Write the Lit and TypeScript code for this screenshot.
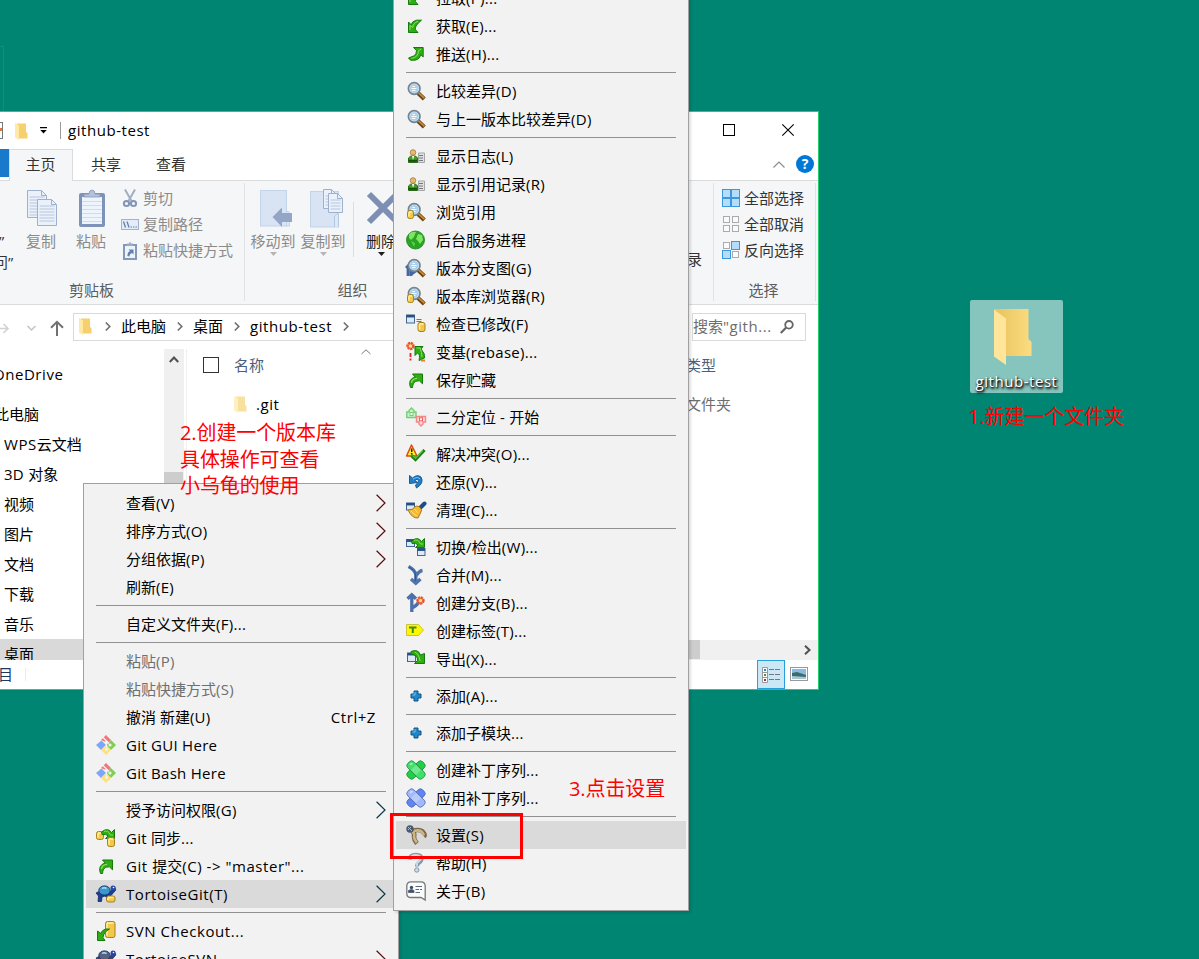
import { LitElement, html, svg, css, nothing } from "lit";
import { customElement, property } from "lit/decorators.js";

const mix = (text: string, wide = false) =>
  text.split(/([\x21-\x7e][\x20-\x7e]*)/).map((part, i) => (i % 2 ? html`<span class="lat ${wide ? "wide" : ""}">${part}</span>` : part));

const shared = css`
  .lat { letter-spacing: 0.28px; }
  .lat.wide { letter-spacing: 0.55px; }
  svg { display: block; overflow: visible; flex: none; }
`;

/* ---------- menu icons, 20 x 20 grid ---------- */
const G = "#2fae14", GD = "#157a0c";
const arrowUR = svg`<path d="M4.500 17.500Q2.600 12 5.200 9.300Q7 7.200 9.400 7.200L6.500 4H16.500V13.800L13.400 10.800Q9 10.500 7.600 13.200Q6.600 15 6.600 17.500Z" fill="${G}" stroke="${GD}"/><path d="M5.400 13Q6 8.500 11 8.300" fill="none" stroke="#8be05c" stroke-width="1.300"/>`;
const arrowDL = svg`<path d="M15.500 4.200H10.500Q5.500 5.500 5.300 8.800L2.500 6V16.500H12L9.300 13.500Q8.800 9.500 15.500 4.200Z" fill="${G}" stroke="${GD}"/><path d="M12 5.200Q7 7 6.800 11.500L4 9.500V14" fill="none" stroke="#8be05c"/>`;
const push = svg`<path d="M2.500 14L4.500 16.200H9Q14.200 15 14.600 10.500L17.200 13V3.500H7.500L10.500 6.500Q10.800 11 7.500 12Q5 13 2.500 14Z" fill="${G}" stroke="${GD}"/><path d="M5.500 14.300Q12.500 13.500 12.500 6.500L15.500 5" fill="none" stroke="#8be05c"/>`;
const lens = svg`<path d="M12 12L18.300 18" stroke="#6a431a" stroke-width="4.200"/><path d="M12.500 11.800L18.300 17.200" stroke="#cf8a2c" stroke-width="1.700"/><circle cx="8.200" cy="7.500" r="5.800" fill="#cfe6f5" stroke="#74838f" stroke-width="1.700"/><circle cx="8.200" cy="7.500" r="4.200" fill="#a9cfec"/><path d="M5.500 7.500H10.500M6.500 5.500H9M6 9.500H9.500" stroke="#fff" stroke-width="1.100"/>`;
const cyl = (x: number, y: number, w = 7, h = 9) => svg`<rect x="${x}" y="${y}" width="${w}" height="${h}" rx="2" fill="#f2c84b" stroke="#a8801c"/><path d="M${x + 1.5} ${y + 2}V${y + h - 2}M${x + 1.5} ${y + 1.5}H${x + w - 1.5}" stroke="#fff0a8" stroke-width="1.400"/>`;
const user = svg`<circle cx="7" cy="6.500" r="2.800" fill="#e6b873" stroke="#a87936" stroke-width=".8"/><path d="M2.500 16.500V12Q4 9.500 7 10Q10.500 9.500 11.500 12V16.500Z" fill="#3fa01f" stroke="#286e14"/><path d="M2.500 14.800H11" stroke="#174d0c" stroke-width="2"/><path d="M6 10L7 14L8.300 10Z" fill="#fff"/><path d="M12.500 7H18.500V16.500H12.500Z" fill="#dfe1e3" stroke="#a3a6a9"/><path d="M13 9.500H17M13 12H17M13 14.500H17" stroke="#777"/>`;
const blueWin = (x: number, y: number, w: number, h: number) => svg`<rect x="${x}" y="${y}" width="${w}" height="${h}" fill="#dce9f6" stroke="#41668f"/><path d="M${x} ${y + 1.2}H${x + w}" stroke="#244f87" stroke-width="2.500"/>`;
const star = (x: number, y: number, r: number) => svg`<circle cx="${x}" cy="${y}" r="${r}" fill="#f99a60" stroke="#e9552b" stroke-width="2.400" stroke-dasharray="2.200 .6"/><circle cx="${x}" cy="${y}" r="1.500" fill="#ffe09a"/>`;
const swoop = svg`<path d="M5.500 4Q12-1 15.500 4.500L18.500 1.500V10.500H9.500L12 8Q10 5.500 6 6.500Z" fill="${G}" stroke="${GD}"/><path d="M8 3.500Q12 1.500 14.500 7H17" fill="none" stroke="#8be05c"/>`;
const plus = svg`<path d="M8 5H12V8H15V12H12V15H8V12H5V8H8Z" fill="#1e88c9" stroke="#125585"/><path d="M9 6V9H6.500" fill="none" stroke="#74c4ef"/>`;
const patch = (a: string, b: string, c: string) => svg`<g stroke="${c}" stroke-width=".8"><rect x="-4.300" y="-10.500" width="8.600" height="21" rx="3.200" transform="translate(10 10) rotate(45)" fill="${b}"/><rect x="-4.300" y="-10.500" width="8.600" height="21" rx="3.200" transform="translate(10 10) rotate(-45)" fill="${a}"/></g><path d="M10 5L15 10L10 15L5 10Z" fill="#fff" fill-opacity=".25"/><path d="M4 4.500L6.500 3.500" stroke="#fff" stroke-opacity=".6" stroke-width="1.500"/>`;
const gitLogo = svg`<path d="M5.500 5.500L10 10L5 15L0 10Z" fill="#7aa7fb"/><path d="M10 0L15 5L12 8L5 5Z" fill="#f0777c"/><path d="M15 5L20 10L15 15L10 10Z" fill="#7fcf54"/><path d="M10 10L15 15L10 20L5 15Z" fill="#ffe07a"/><path d="M7 2.500L13 8.500M10.500 7V15" stroke="#f2f2f2" stroke-width="1.300"/><circle cx="10.500" cy="7.300" r="1.600" fill="#f2f2f2"/><circle cx="14" cy="10" r="1.600" fill="#f2f2f2"/><circle cx="10.500" cy="14.500" r="1.600" fill="#f2f2f2"/>`;
const turtle = (shell: string, body: string) => svg`<path d="M0 9L4 7L14 8L18.500 2L19.800 6L15 11.500L14 14H11L9 12L6 13L5.500 17.500H2L2.500 12Z" fill="${body}" stroke="#0c1f5c" stroke-width=".7"/><ellipse cx="8.500" cy="6.500" rx="5.700" ry="4.600" fill="${shell}" stroke="#123a70"/><path d="M6 4.500Q8 3 10.500 4.500" fill="none" stroke="#a9def5" stroke-width="1.500"/><circle cx="17" cy="4" r="2.500" fill="#2448a8"/><circle cx="17.500" cy="3.500" r=".8" fill="#fff"/>`;

const icons: Record<string, unknown> = {
  arrowUR, arrowDL, push, lens, user, swoop, plus, gitLogo,
  browse: svg`${lens}${cyl(1.5, 8.5, 6, 8)}`,
  globe: svg`<circle cx="9.500" cy="10" r="9" fill="#27a523" stroke="#1c8020" stroke-width=".8"/><path d="M3 4Q6 1 10 2L8 7L5 10L3 8ZM12 4L16 5L17 10L14 14L12 11L10 9Z" fill="#8ff06b" fill-opacity=".85"/><path d="M5 11L9 13L8 17Z" fill="#62d04b"/>`,
  graph: svg`<path d="M2 18V8L0 10M5 18V8M2 9L6 4M4 17L11 12" fill="none" stroke="#4467a3" stroke-width="2.800"/>${lens}`,
  check: svg`${blueWin(.5, 1, 8, 8)}<path d="M10.500 5.500H15.500M10.500 7.500H15.500" stroke="#6b7780"/>${cyl(12, 8.5)}`,
  rebase: svg`${star(4.5, 4, 3)}<path d="M4.500 11V15M4.500 16.500V18.500" stroke="#e02020" stroke-width="1.800"/><path d="M9 4.500H17L15 7Q19.500 12 18.500 16L13 18.500Q14.500 12 11.500 11L9 13.500Z" fill="${G}" stroke="${GD}"/><path d="M10.500 6H14Q16 10 16 15" fill="none" stroke="#8be05c"/><path d="M15 18.500L19 18.500" stroke="#ee7c2a" stroke-width="2"/>`,
  bisect: svg`<path d="M5.500 1L8 3.500V5H10V10.500H.800V5H3V3.500Z" fill="#cff0c8" stroke="#6fcf74" stroke-width="1.400"/><rect x="4" y="5.500" width="3" height="3" fill="#fff" stroke="#6fcf74"/><path d="M10.500 9.500H19.500V15H17V17L15 19L13 17V15H10.500Z" fill="#ffd9d9" stroke="#f58787" stroke-width="1.400"/><rect x="13.500" y="10.800" width="3" height="3" fill="#fff" stroke="#ee6060"/>`,
  resolve: svg`<path d="M5.500 1L11 12H.500Z" fill="#fff02a" stroke="#e0481b" stroke-width="1.500" stroke-linejoin="round"/><path d="M5.700 4.500V8M5.700 9V10.500" stroke="#222" stroke-width="1.500"/><path d="M5.500 11.500L9.500 15.500L18.500 6" fill="none" stroke="#1e7d12" stroke-width="3.200"/><path d="M6.500 11.500L9.500 14.300L17 6.500" fill="none" stroke="#57c837" stroke-width="1.200"/>`,
  revert: svg`<path d="M3.500 3.500L6.500 6Q11 2 15 5Q18.500 11 10.500 16L9.500 13Q14 9.500 11.500 7.500Q10 7 9 8.500L11.500 10.500L3.500 11.500Z" fill="#1f7fc8" stroke="#185a96"/><path d="M7 7Q12 4 14 7" fill="none" stroke="#7cc5f0"/>`,
  clean: svg`${blueWin(.5, 3, 8, 7)}<path d="M18.500 3.500L14 8" stroke="#1b4c8e" stroke-width="4" stroke-linecap="round"/><path d="M2 10L7 9Q10 4 14 7.500Q17 10 14.500 13L12 18Q6 18.500 2 10Z" fill="#f4b832" stroke="#b07c14"/><path d="M5 11Q8 14.500 11 16M8.500 9L12 13" stroke="#ffe28a" fill="none"/>`,
  switch: svg`${blueWin(.5, 2.5, 8, 7)}${swoop}${blueWin(11.5, 11.5, 7.5, 7)}`,
  merge: svg`<path d="M2.500 1.500Q9 5 9.800 9.500V17M16.500 5.500Q13 6 10 11M5 14L9.800 18.200L14.500 14" fill="none" stroke="#5173ab" stroke-width="3.400"/><path d="M3 2Q9 5 9.500 9V16" fill="none" stroke="#2c5795"/>`,
  branch: svg`<path d="M5.800 19V2M1.500 5.800L5.800 1.800L10 5.800M6 15Q12 12 13 8" fill="none" stroke="#4c70ab" stroke-width="3.300"/>${star(14.5, 7.5, 3)}`,
  tag: svg`<path d="M.5 3.500H12.500L17.500 9L12.500 14.500H.5Z" fill="#fff700" stroke="#c9c43a"/><path d="M3 6.500H10.500M6.800 6.500V12" stroke="#3d8d17" stroke-width="2"/>`,
  export: svg`${blueWin(1.5, 4, 8, 8.5)}<path d="M5 2.500Q12-.5 14.500 6L18.500 4.500V14.500H8.500L11.500 11.500Q12 6 5 5Z" fill="${G}" stroke="${GD}"/><path d="M9 3Q13 5 14 12" fill="none" stroke="#8be05c"/>`,
  patchG: patch("#3fe06b", "#1ed048", "#218d36"),
  patchB: patch("#a2b9fb", "#5d86f3", "#5367b5"),
  pliers: svg`<path d="M6 6Q9 8 8 12Q8 15 11 18.500" fill="none" stroke="#77684a" stroke-width="4.600"/><path d="M6 6Q14 3.500 17 7Q19.500 10 18 11.500" fill="none" stroke="#77684a" stroke-width="4.600"/><path d="M6.500 6.500Q9 9 8 12Q8.500 15 10.800 17.500M8 6Q14 4 16.800 8L18 10.500" fill="none" stroke="#cdb683" stroke-width="2.600"/><circle cx="4" cy="4" r="3.700" fill="#4a5870"/><path d="M2 2L6 6M2 5L5 2" stroke="#aab9ce"/>`,
  help: svg`<path d="M3.500 6.500Q4 2 10 1.800Q16 2 15.500 6Q15.500 8 12.500 10Q11 11 11 13.500" fill="none" stroke="#8798a8" stroke-width="4.200"/><path d="M4 5.800Q5 2 10 2Q15 2.500 14.800 6Q13.500 8 11 10V12.800" fill="none" stroke="#c9dcea" stroke-width="2"/><circle cx="10.800" cy="17" r="2.200" fill="#c9dcea" stroke="#8798a8"/>`,
  about: svg`<path d="M5 .8H15Q19.200.8 19.200 5V19L15 16.500H5Q.8 16.500.8 12.500V5Q.8.8 5 .8Z" fill="#fcfcfc" stroke="#74777b" stroke-width="1.300"/><circle cx="5.500" cy="6.500" r="1.700" fill="#3f4f67"/><path d="M2.500 11.500V9.500Q5.500 7.500 8 9.500V11.500ZM9.500 5.500H16M9.500 8.500H13M14 8.500H16M9.500 11.500H14" fill="#3f4f67" stroke="#5a6a80"/>`,
  sync: svg`${cyl(.5, 3.5, 7, 8)}${swoop}${cyl(11.5, 9.5, 7, 9)}`,
  tgit: svg`${turtle("#3d96cd", "#1f3d94")}${cyl(10.5, 12, 8.5, 6)}`,
  svn: svg`${cyl(9.5, .5, 9.5, 16)}<path d="M13.500 8H9.500Q5.500 9.500 5 12.500L1.500 10V19.500H9L7 16.500Q7.500 11 13.500 8Z" fill="${G}" stroke="${GD}"/>`,
  tsvn: turtle("#5a617f", "#3c4468"),
};

type Item = { icon?: string; text: string; key?: string; off?: boolean; hot?: boolean; sub?: string; wide?: boolean } | null;

@customElement("context-menu")
class ContextMenu extends LitElement {
  @property({ attribute: false }) items: Item[] = [];
  static styles = [shared, css`
    :host { display: block; box-sizing: border-box; background: #f2f2f2; border: 1px solid #a0a0a0; padding: 5px 2px 4px; overflow: hidden;
      box-shadow: 2px 2px 2px rgba(0,0,0,.12); }
    .row { display: flex; align-items: center; height: 28px; padding: 0 10px; white-space: nowrap; color: #000; }
    .row.hot { background: #dadada; }
    .row.off { color: #6f6f6f; }
    .ico { width: 20px; height: 20px; margin-right: 10px; flex: none; }
    .txt { flex: 1; line-height: 28px; }
    .key { margin-right: 10px; }
    .sep { height: 1px; background: #919191; margin: 4px 10px; }
  `];
  render() {
    return this.items.map((it) => it === null ? html`<div class="sep"></div>` : html`
      <div class="row ${it.hot ? "hot" : ""} ${it.off ? "off" : ""}">
        <div class="ico">${it.icon ? html`<svg width="20" height="20" viewBox="0 0 20 20">${icons[it.icon]}</svg>` : nothing}</div>
        <div class="txt">${mix(it.text, it.wide)}</div>
        ${it.key ? html`<div class="key">${mix(it.key, true)}</div>` : nothing}
        ${it.sub ? html`<svg width="10" height="18" viewBox="0 0 10 18"><path d="M.6.8L9 9L.6 17.200" fill="none" stroke="${it.sub}" stroke-width="1.200"/></svg>` : nothing}
      </div>`);
  }
}

const R = "#5a0c0c", B = "#0c3848";
const leftItems: Item[] = [
  { text: "查看(V)", sub: R }, { text: "排序方式(O)", sub: R }, { text: "分组依据(P)", sub: R }, { text: "刷新(E)" }, null,
  { text: "自定义文件夹(F)..." }, null,
  { text: "粘贴(P)", off: true }, { text: "粘贴快捷方式(S)", off: true }, { text: "撤消 新建(U)", key: "Ctrl+Z" },
  { icon: "gitLogo", text: "Git GUI Here" }, { icon: "gitLogo", text: "Git Bash Here" }, null,
  { text: "授予访问权限(G)", sub: B }, { icon: "sync", text: "Git 同步..." }, { icon: "arrowUR", text: 'Git 提交(C) -> "master"...', wide: true },
  { icon: "tgit", text: "TortoiseGit(T)", sub: B, hot: true, wide: true }, null,
  { icon: "svn", text: "SVN Checkout...", wide: true }, { icon: "tsvn", text: "TortoiseSVN", sub: R, wide: true },
];
const rightItems: Item[] = [
  { icon: "arrowDL", text: "拉取(P)..." }, { icon: "arrowDL", text: "获取(E)..." }, { icon: "push", text: "推送(H)..." }, null,
  { icon: "lens", text: "比较差异(D)" }, { icon: "lens", text: "与上一版本比较差异(D)" }, null,
  { icon: "user", text: "显示日志(L)" }, { icon: "user", text: "显示引用记录(R)" }, { icon: "browse", text: "浏览引用" },
  { icon: "globe", text: "后台服务进程" }, { icon: "graph", text: "版本分支图(G)" }, { icon: "browse", text: "版本库浏览器(R)" },
  { icon: "check", text: "检查已修改(F)" }, { icon: "rebase", text: "变基(rebase)..." }, { icon: "arrowUR", text: "保存贮藏" }, null,
  { icon: "bisect", text: "二分定位 - 开始" }, null,
  { icon: "resolve", text: "解决冲突(O)..." }, { icon: "revert", text: "还原(V)..." }, { icon: "clean", text: "清理(C)..." }, null,
  { icon: "switch", text: "切换/检出(W)..." }, { icon: "merge", text: "合并(M)..." }, { icon: "branch", text: "创建分支(B)..." },
  { icon: "tag", text: "创建标签(T)..." }, { icon: "export", text: "导出(X)..." }, null,
  { icon: "plus", text: "添加(A)..." }, null, { icon: "plus", text: "添加子模块..." }, null,
  { icon: "patchG", text: "创建补丁序列..." }, { icon: "patchB", text: "应用补丁序列..." }, null,
  { icon: "pliers", text: "设置(S)", hot: true }, { icon: "help", text: "帮助(H)" }, { icon: "about", text: "关于(B)" },
];

/* ---------- explorer window ---------- */
const folder = (op = 1) => html`<svg class="folder" width="13" height="17" viewBox="0 0 13 17" opacity=${op}><path d="M2 .5H11V9L12.500 10V15.500H3Z" fill="#f5d06c"/><path d="M0 0L4 2.500V17L0 14.500Z" fill="#ffe9a6"/></svg>`;
const crumb = html`<svg width="6" height="9" viewBox="0 0 6 9"><path d="M.8.5L4.800 4.500L.8 8.500" fill="none" stroke="#6d6d6d" stroke-width="1.600"/></svg>`;
const page = (x: number, y: number, w: number, h: number) => svg`<path d="M${x} ${y}H${x + w - 5}L${x + w} ${y + 5}V${y + h}H${x}Z" fill="#eaf1fb" stroke="#9fb0cc"/><path d="M${x + w - 5} ${y}V${y + 5}H${x + w}" fill="none" stroke="#9fb0cc"/>${[6, 9, 12, 15, 18, 21, 24].filter((k) => k < h - 2).map((k) => svg`<path d="M${x + 2} ${y + k + .5}H${x + w - 2}" stroke="#b6c5dd"/>`)}`;
const icoCopy = html`<svg width="30" height="37" viewBox="0 0 30 37">${page(.5, .5, 19, 27)}${page(10.5, 9.5, 19, 26)}</svg>`;
const icoPaste = html`<svg width="26" height="38" viewBox="0 0 26 38"><rect x="0" y="4" width="26" height="34" rx="2" fill="#7f92b8"/><path d="M3 8H23V35H3Z" fill="#eef4fc"/><path d="M3 12.500H23M3 16.500H23M3 20.500H23M3 24.500H23M3 28.500H23M3 32.500H23" stroke="#cfdcee"/><path d="M5 8V5H10Q10 1 13 1Q16 1 16 5H21V8Z" fill="#b3c1d9" stroke="#8598b9" stroke-width=".8"/></svg>`;
const icoMove = html`<svg width="33" height="37" viewBox="0 0 33 37"><rect x=".5" y=".5" width="26" height="35.500" fill="#d8e4f3" stroke="#c3d3e9"/><path d="M26.500 24V22Q29.500 20 29.500 24V36H26.500Z" fill="#dde8f6" stroke="#c3d3e9"/><path d="M12.500 27L22 17.500V23H32V32H22V37Z" fill="#94a6c6"/></svg>`;
const icoCopyTo = html`<svg width="34" height="39" viewBox="0 0 34 39"><rect x=".5" y="2.500" width="28" height="35.500" fill="#d8e4f3" stroke="#c3d3e9"/><path d="M24.500 38V27Q28.500 23 28.500 26V38" fill="#dde8f6" stroke="#b5c8e2"/>${page(13.5, .5, 13, 19)}${page(18.5, 4.5, 14, 19)}</svg>`;
const icoDel = html`<svg width="32" height="30" viewBox="0 0 32 30"><path d="M2 1L30 29M30 1L2 29" stroke="#7d8fb3" stroke-width="6"/></svg>`;
const icoCut = html`<svg width="14" height="19" viewBox="0 0 14 19"><path d="M2 .5L8.500 12M12 .5L5.500 12" stroke="#9fafc8" stroke-width="2"/><circle cx="3.500" cy="14.500" r="2.600" fill="none" stroke="#8295b6" stroke-width="2"/><circle cx="10.500" cy="14.500" r="2.600" fill="none" stroke="#8295b6" stroke-width="2"/></svg>`;
const icoPath = html`<svg width="18" height="11" viewBox="0 0 18 11"><rect x=".5" y=".5" width="17" height="10" fill="#e3edf9" stroke="#a3b2cb"/><path d="M2.500 2.500L4.500 8.500M6 2.500L8 8.500" stroke="#687fa5" stroke-width="1.300"/><path d="M9.500 8H11M12 8H13.500M14.500 8H16" stroke="#687fa5"/></svg>`;
const icoShort = html`<svg width="14" height="19" viewBox="0 0 14 19"><rect x="1" y="4" width="12" height="14" fill="#edf3fb" stroke="#8598b9" stroke-width="2"/><path d="M4 5V2.500H6L7 .5L8 2.500H10V5Z" fill="#9aabc8"/><path d="M4.500 15Q4 11 7 10L5.500 8.500H10.500V13.500L9 12Q6.500 12.500 6.500 15.500Z" fill="#6580aa"/></svg>`;
const tri = (c: string) => html`<svg width="7" height="4" viewBox="0 0 7 4"><path d="M0 0H7L3.500 4Z" fill="${c}"/></svg>`;
const box = (x: number, y: number, on: boolean) => svg`<rect x="${x}" y="${y}" width="${on ? 8 : 6}" height="${on ? 8 : 6}" fill="${on ? "#b5dcf8" : "#fbfbfb"}" stroke="${on ? "#3b97e0" : "#ababab"}"/>`;
const icoAll = html`<svg width="18" height="18" viewBox="0 0 18 18">${box(.5, .5, true)}${box(9.5, .5, true)}${box(.5, 9.5, true)}${box(9.5, 9.5, true)}</svg>`;
const icoNone = html`<svg width="18" height="18" viewBox="0 0 18 18">${box(1.5, 1.5, false)}${box(10.5, 1.5, false)}${box(1.5, 10.5, false)}${box(10.5, 10.5, false)}</svg>`;
const icoInv = html`<svg width="18" height="18" viewBox="0 0 18 18">${box(1.5, 1.5, false)}${box(9.5, .5, true)}${box(.5, 9.5, true)}${box(10.5, 10.5, false)}</svg>`;

@customElement("explorer-window")
class ExplorerWindow extends LitElement {
  static styles = [shared, css`
    :host { display: flex; flex-direction: column; box-sizing: border-box; background: #fff; border: 1px solid #22cc70; border-left: 0; color: #000; overflow: hidden; white-space: nowrap; }
    .title { display: flex; align-items: center; height: 35px; padding-bottom: 2px; }
    .title .folder { margin-top: 3px; }
    .frag { width: 3px; height: 17px; box-sizing: border-box; border: 1px solid #777; border-left: 0; margin: 2px 12px 0 0; background: linear-gradient(#fff 5px, #e8743c 5px, #e8743c 8px, #fff 8px); }
    .quick { margin: 2px 0 0 12px; }
    .bar { width: 1px; height: 17px; background: #9a9a9a; margin: 2px 7px 0 13px; }
    .name { flex: 1; }
    .max { width: 10px; height: 10px; border: 1px solid #000; margin-right: 47px; }
    .close { margin-right: 24px; }
    .tabs { display: flex; align-items: stretch; height: 31px; border-bottom: 1px solid #dadbdc; line-height: 31px; color: #333; }
    .file { width: 9px; height: 28px; background: #1979ca; }
    .home { width: 61px; padding-right: 1px; text-align: center; background: #f5f6f7; border: 1px solid #dadbdc; border-bottom: 0; margin-bottom: -1px; line-height: 29px; }
    .tab { margin-left: 18px; width: 47px; }
    .tabs .grow { flex: 1; }
    .up { margin: 12px 11px 0 0; }
    .help { width: 18px; height: 18px; border-radius: 50%; background: #0078d7; color: #fff; font-size: 14px; font-weight: 700; line-height: 18px; text-align: center; margin: 6px 4px 0 0; }
    .ribbon { display: flex; height: 123px; background: #f5f6f7; border-bottom: 1px solid #dadbdc; color: #8b8b8b; line-height: 20px; }
    .pin { width: 16px; color: #333; padding-top: 49px; line-height: 22px; }
    .pin div { margin-left: -1px; }
    .pin div + div { margin: -1px 0 0 -7px; }
    .group { display: flex; flex-direction: column; border-right: 1px solid #e1e2e3; margin: 2px 0 3px; box-sizing: border-box; }
    .tools { display: flex; height: 98px; }
    .cap { text-align: center; color: #5c5c5c; line-height: 22px; }
    .big { display: flex; flex-direction: column; align-items: center; width: 50px; }
    .big .pic { height: 42px; display: flex; align-items: center; margin-top: 4px; margin-bottom: 1px; }
    .big .p1 { padding-left: 2px; }
    .big .p2 { padding-left: 7px; }
    .big .p3 { padding-left: 4px; }
    .big .tl { line-height: 22px; }
    .dark { color: #1e1e1e; }
    .small { display: flex; flex-direction: column; gap: 4px; padding-top: 4px; margin-left: 5px; }
    .small div { display: flex; align-items: center; height: 22px; }
    .small svg { width: 18px; margin-right: 4px; }
    .vr { width: 1px; height: 55px; background: #dcdddf; margin: 19px 10px 0 5px; }
    .hidden { flex: 1; display: flex; }
    .lu { color: #333; margin-left: auto; padding-top: 68px; margin-right: 11px; }
    .sel { color: #333; width: 103px; border-left: 1px solid #e1e2e3; }
    .addr { display: flex; align-items: center; height: 43px; margin-bottom: 1px; }
    .nav { display: flex; align-items: center; width: 73px; box-sizing: border-box; padding-top: 2px; }
    .path { display: flex; align-items: center; flex: 1; height: 26px; line-height: 24px; border: 1px solid #d9d9d9; padding-left: 5px; gap: 10.5px; }
    .path > span { margin-top: -2px; }
    .path .folder { margin-right: 2px; }
    .search { display: flex; align-items: center; width: 112px; height: 26px; border: 1px solid #d9d9d9; margin: 0 12px 0 6px; color: #6d6d6d; }
    .search > span { margin-top: -2px; }
    .search svg { margin-left: auto; margin-right: 11px; }
    .body { display: grid; grid-template-columns: 164px 20px 1fr; height: 311px; }
    .tree { overflow: hidden; line-height: 30px; padding-top: 10px; box-sizing: border-box; }
    .tree div { height: 30px; padding-left: 4px; }
    .tree .one { margin: 0 0 10px -11px; }
    .tree .pc { padding-left: 0; margin-left: -6px; }
    .tree .on { background: #d9d9d9; }
    .scroll { background: #f0f0f0; display: flex; flex-direction: column; align-items: center; padding-top: 7px; }
    .thumb { width: 19px; flex: 1; background: #cdcdcd; margin: 109px 1px 0 0; }
    .list { display: flex; flex-direction: column; border-left: 1px solid #efefef; margin-left: 2px; }
    .head { display: flex; align-items: center; height: 32px; color: #4c607a; padding-left: 16px; }
    .check { width: 14px; height: 14px; border: 1px solid #333; margin-right: 15px; }
    .sort { margin: -26px 0 0 97px; }
    .type { margin-left: auto; width: 132px; }
    .item { display: flex; align-items: center; height: 30px; margin-top: 8px; padding-left: 47px; }
    .item .type { color: #6d6d6d; }
    .item > span { margin-left: 9px; }
    .hbar { display: flex; align-items: center; justify-content: flex-end; height: 20px; background: #f0f0f0; margin-top: auto; }
    .hthumb { width: 300px; height: 19px; background: #cdcdcd; margin: 0 104px 1px 0; }
    .right { margin: 0 7px 0 0; }
    .status { display: flex; align-items: center; height: 29px; color: #1e395b; }
    .status .n { margin: -1px auto 0 -2px; width: 27px; border-right: 1px solid #ececec; line-height: 13px; }
    .view { width: 26px; height: 27px; background: #cce8f6; border: 1px solid #26a0da; display: flex; align-items: center; justify-content: center; margin-right: 5px; }
    .thumbs { margin: -2px 10px 0 0; }
  `];
  render() {
    return html`
      <div class="title">
        <div class="frag"></div>${folder()}
        <svg class="quick" width="7" height="7" viewBox="0 0 7 7"><path d="M0 0H7V1.200H0ZM.3 3H6.700L3.500 6.500Z" fill="#000"/></svg>
        <div class="bar"></div><div class="name">${mix("github-test", true)}</div>
        <div class="max"></div>
        <svg class="close" width="12" height="12" viewBox="0 0 12 12"><path d="M.3.3L11.700 11.700M11.700.3L.3 11.700" stroke="#000" stroke-width="1.100"/></svg>
      </div>
      <div class="tabs">
        <div class="file"></div><div class="home">主页</div><div class="tab">共享</div><div class="tab">查看</div><div class="grow"></div>
        <svg class="up" width="12" height="7" viewBox="0 0 12 7"><path d="M.5 6.500L6 1L11.500 6.500" fill="none" stroke="#8b8b8b" stroke-width="1.200"/></svg>
        <div class="help">?</div>
      </div>
      <div class="ribbon">
        <div class="pin"><div>”</div><div>问”</div></div>
        <div class="group" style="width:229px">
          <div class="tools">
            <div class="big"><div class="pic p1">${icoCopy}</div><div class="tl">复制</div></div>
            <div class="big"><div class="pic p1">${icoPaste}</div><div class="tl">粘贴</div></div>
            <div class="small"><div>${icoCut}剪切</div><div>${icoPath}复制路径</div><div>${icoShort}粘贴快捷方式</div></div>
          </div>
          <div class="cap" style="padding-right:77px">剪贴板</div>
        </div>
        <div class="group" style="width:220px">
          <div class="tools" style="padding-left:3px">
            <div class="big"><div class="pic p2">${icoMove}</div><div class="tl">移动到</div>${tri("#b5b5b5")}</div>
            <div class="big"><div class="pic p2">${icoCopyTo}</div><div class="tl">复制到</div>${tri("#b5b5b5")}</div>
            <div class="vr"></div>
            <div class="big dark" style="width:34px"><div class="pic p3">${icoDel}</div><div class="tl">删除</div>${tri("#1e1e1e")}</div>
          </div>
          <div class="cap" style="padding-right:4px">组织</div>
        </div>
        <div class="hidden"><div class="lu">录</div></div>
        <div class="group sel">
          <div class="tools"><div class="small" style="margin-left:8px"><div>${icoAll}全部选择</div><div>${icoNone}全部取消</div><div>${icoInv}反向选择</div></div></div>
          <div class="cap" style="padding-right:2px">选择</div>
        </div>
        <div style="width:2px"></div>
      </div>
      <div class="addr">
        <div class="nav">
          <svg width="64" height="20" viewBox="0 0 64 20"><path d="M0 10.500H8M3.500 6L8 10.500L3.500 15" fill="none" stroke="#d2d2d2" stroke-width="1.600"/><path d="M27.500 8L31.500 12L35.500 8" fill="none" stroke="#c4c4c4" stroke-width="1.500"/><path d="M57 18V4M51 9.800L57 3.800L63 9.800" fill="none" stroke="#717171" stroke-width="2"/></svg>
        </div>
        <div class="path">${folder()}${crumb}<span>此电脑</span>${crumb}<span>桌面</span>${crumb}<span>${mix("github-test", true)}</span>${crumb}</div>
        <div class="search"><span>搜索${mix('"gith...', true)}</span><svg width="14" height="14" viewBox="0 0 14 14"><circle cx="9" cy="4.800" r="3.800" fill="none" stroke="#666" stroke-width="1.800"/><path d="M6.200 7.500L.8 13" stroke="#666" stroke-width="2.200"/></svg></div>
      </div>
      <div class="body">
        <div class="tree">
          <div class="one">${mix("OneDrive", true)}</div><div class="pc">此电脑</div><div>${mix("WPS", true)}云文档</div><div>${mix("3D ")}对象</div>
          <div>视频</div><div>图片</div><div>文档</div><div>下载</div><div>音乐</div><div class="on">桌面</div>
        </div>
        <div class="scroll"><svg width="10" height="7" viewBox="0 0 10 7"><path d="M.8 6L5 1.500L9.200 6" fill="none" stroke="#505050" stroke-width="2"/></svg><div class="thumb"></div></div>
        <div class="list">
          <div class="head"><div class="check"></div>名称
            <svg class="sort" width="10" height="6" viewBox="0 0 10 6"><path d="M.5 5L5 .8L9.500 5" fill="none" stroke="#777"/></svg>
            <div class="type">类型</div></div>
          <div class="item">${folder(.65)}<span>${mix(".git", true)}</span><div class="type">文件夹</div></div>
          <div class="hbar"><div class="hthumb"></div><svg class="right" width="7" height="10" viewBox="0 0 7 10"><path d="M1 .8L5.500 5L1 9.200" fill="none" stroke="#505050" stroke-width="2"/></svg></div>
        </div>
      </div>
      <div class="status">
        <div class="n">目</div>
        <div class="view"><svg width="18" height="16" viewBox="0 0 18 16"><path d="M.5.5H5.500V15.500H.5ZM.5 5.500H5.500M.5 10.500H5.500" fill="#fff" stroke="#999"/><path d="M2 3H4" stroke="#2a86c8" stroke-width="2"/><path d="M2 8H4" stroke="#5a8a3a" stroke-width="2"/><path d="M2 13H4" stroke="#b03030" stroke-width="2"/><path d="M7 2.500H12M13 2.500H18M7 7.500H12M13 7.500H18M7 12.500H12M13 12.500H18" stroke="#777"/></svg></div>
        <svg class="thumbs" width="18" height="14" viewBox="0 0 18 14"><rect x=".5" y=".5" width="17" height="13" fill="#fff" stroke="#999"/><rect x="2" y="2" width="14" height="10" fill="#8db9ea"/><path d="M2 6L7 5L16 8V12H2Z" fill="#3b6d65"/><path d="M2 9L16 10V12H2Z" fill="#a9c6d8"/></svg>
      </div>`;
  }
}

@customElement("app-root")
class AppRoot extends LitElement {
  static styles = [shared, css`
    :host { display: block; position: relative; width: 1199px; height: 959px; overflow: hidden; background: #008573; font: 15px/20px "Open Sans", "Noto Sans CJK SC", sans-serif; }
    .ghost { position: absolute; left: -2px; top: 46px; width: 4px; height: 64px; border: 1px solid #0e8e7b; }
    .win { position: absolute; left: 0; top: 111px; width: 819px; height: 579px; }
    .m1 { position: absolute; left: 83px; top: 483px; width: 316px; height: 500px; }
    .m2 { position: absolute; left: 393px; top: -22px; width: 296px; height: 933px; }
    .frame { position: absolute; left: 390px; top: 813px; width: 127px; height: 40px; border: 3px solid #f00; }
    .note { position: absolute; color: #f00; font-size: 20px; line-height: 26.500px; letter-spacing: -.1px; white-space: nowrap; }
    .n1 { left: 968px; top: 404px; }
    .n2 { left: 180px; top: 420px; }
    .n3 { left: 569px; top: 776px; }
    .desk { position: absolute; left: 970px; top: 300px; width: 93px; height: 93px; background: #86c5bd; border-radius: 2px; display: flex; flex-direction: column; align-items: center; color: #fff; text-shadow: 1px 1px 2px #000, 1px 2px 3px #000; }
    .desk svg { margin: 8px 1px 6px 0; }
  `];
  render() {
    return html`
      <div class="ghost"></div>
      <explorer-window class="win"></explorer-window>
      <context-menu class="m1" .items=${leftItems}></context-menu>
      <context-menu class="m2" .items=${rightItems}></context-menu>
      <div class="frame"></div>
      <div class="desk">
        <svg width="46" height="57" viewBox="0 0 46 57"><defs><linearGradient id="f"><stop offset="0" stop-color="#e8c35c"/><stop offset="1" stop-color="#fbdc82"/></linearGradient></defs>
          <path d="M1.500 1H35.500V31L38.500 34V48H12Z" fill="url(#f)"/><path d="M1 1.500L13 10.500V57L1 48.500Z" fill="#fee59a"/></svg>
        <div>${mix("github-test", true)}</div>
      </div>
      <div class="note n1">1.新建一个文件夹</div>
      <div class="note n2">2.创建一个版本库<br>具体操作可查看<br>小乌龟的使用</div>
      <div class="note n3">3.点击设置</div>`;
  }
}
